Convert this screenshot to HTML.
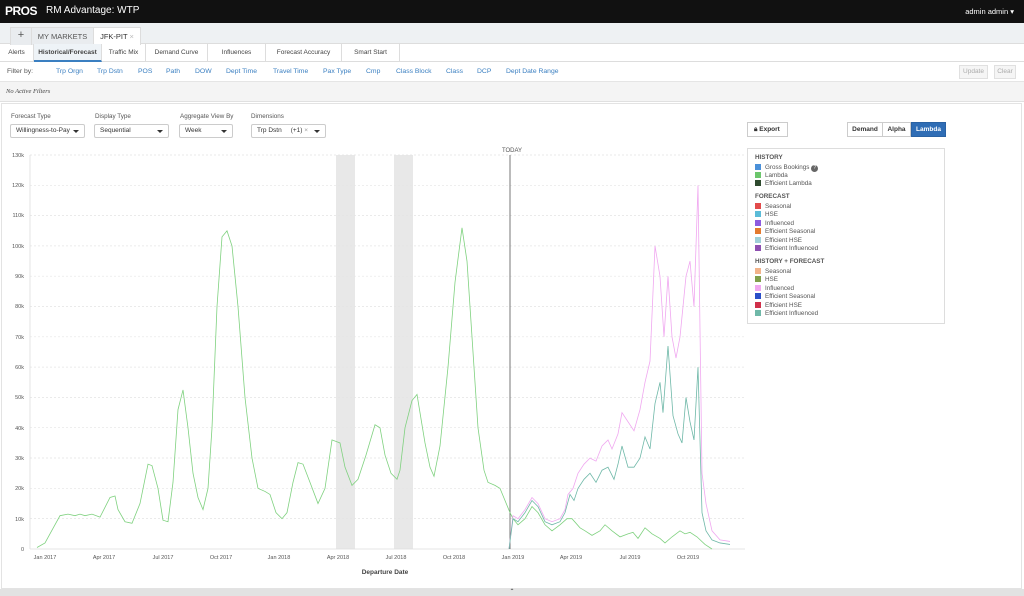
<!DOCTYPE html>
<html><head><meta charset="utf-8"><style>
*{box-sizing:border-box;margin:0;padding:0}
body{width:1024px;height:596px;overflow:hidden;font-family:"Liberation Sans",sans-serif;background:#fff;position:relative;color:#333}
.abs{position:absolute}
.top{left:0;top:0;width:1024px;height:23px;background:#111;color:#fff}
.tabs{left:0;top:23px;width:1024px;height:21px;background:#eef1f3;border-bottom:1px solid #ddd}
.tab{position:absolute;top:4px;height:18px;font-size:7.5px;line-height:17px;text-align:center;border:1px solid #ddd;border-bottom:none;background:#e9ecef;color:#555}
.sub{left:0;top:44px;width:1024px;height:18px;border-bottom:1px solid #ddd;font-size:6.5px}
.sub span{position:absolute;top:0;height:18px;line-height:17px;text-align:center;border-right:1px solid #ddd;color:#444}
.filt{left:0;top:62px;width:1024px;height:20px;font-size:6.8px;color:#3a7fc1;border-bottom:1px solid #e5e5e5}
.filt span{position:absolute;top:6px}
.gray{left:0;top:82px;width:1024px;height:20px;background:#f4f4f4;border-bottom:1px solid #e0e0e0}
.panel{left:1px;top:103px;width:1021px;height:486px;border:1px solid #e3e3e3;background:#fff}
.lbl{font-size:6.3px;color:#555}
.sel{height:14px;border:1px solid #ccc;border-radius:2px;font-size:6.5px;line-height:12px;padding-left:5px;color:#333}
.sel:after{content:"";position:absolute;right:5px;top:5px;border:3px solid transparent;border-top:3.5px solid #333}
.leg{left:747px;top:148px;width:198px;height:176px;border:1px solid #ddd;font-size:6.3px;color:#555}
.leg div{position:absolute;left:7px}
.leg b{font-size:6.3px;color:#555}
.sq{display:inline-block;width:6px;height:6px;margin-right:4px;vertical-align:-1px}
</style></head><body>
<div class="abs top">
 <div class="abs" style="left:5px;top:4px;font-weight:bold;font-size:12px;letter-spacing:-0.5px">PROS</div>
 <div class="abs" style="left:46px;top:5px;font-size:10px">RM Advantage: WTP</div>
 <div class="abs" style="right:10px;top:7px;font-size:7.5px">admin admin ▾</div>
</div>
<div class="abs tabs">
 <div class="tab" style="left:10px;width:22px;font-size:11px;line-height:15px">+</div>
 <div class="tab" style="left:31px;width:63px">MY MARKETS</div>
 <div class="tab" style="left:93px;width:48px;background:#fff;color:#333">JFK-PIT <span style="color:#bbb">×</span></div>
</div>
<div class="abs sub">
 <span style="left:0;width:34px">Alerts</span>
 <span style="left:34px;width:68px;background:#eef3f7;font-weight:bold;border-bottom:2px solid #3a7fc1">Historical/Forecast</span>
 <span style="left:102px;width:44px">Traffic Mix</span>
 <span style="left:146px;width:62px">Demand Curve</span>
 <span style="left:208px;width:58px">Influences</span>
 <span style="left:266px;width:76px">Forecast Accuracy</span>
 <span style="left:342px;width:58px">Smart Start</span>
</div>
<div class="abs filt">
 <span style="left:7px;color:#555">Filter by:</span>
 <span style="left:56px">Trp Orgn</span><span style="left:97px">Trp Dstn</span><span style="left:138px">POS</span><span style="left:166px">Path</span><span style="left:195px">DOW</span><span style="left:226px">Dept Time</span><span style="left:273px">Travel Time</span><span style="left:323px">Pax Type</span><span style="left:366px">Cmp</span><span style="left:396px">Class Block</span><span style="left:446px">Class</span><span style="left:477px">DCP</span><span style="left:506px">Dept Date Range</span>
 <div class="abs" style="left:959px;top:3px;width:29px;height:14px;border:1px solid #e0e0e0;background:#f5f5f5;color:#aaa;font-size:6.5px;line-height:12px;text-align:center">Update</div>
 <div class="abs" style="left:994px;top:3px;width:22px;height:14px;border:1px solid #e0e0e0;background:#f5f5f5;color:#aaa;font-size:6.5px;line-height:12px;text-align:center">Clear</div>
</div>
<div class="abs gray"><div class="abs" style="left:6px;top:6px;font-family:'Liberation Serif',serif;font-style:italic;font-size:6.5px;color:#444">No Active Filters</div></div>
<div class="abs panel"></div>
<div class="abs lbl" style="left:11px;top:113px">Forecast Type</div>
<div class="abs lbl" style="left:95px;top:113px">Display Type</div>
<div class="abs lbl" style="left:180px;top:113px">Aggregate View By</div>
<div class="abs lbl" style="left:251px;top:113px">Dimensions</div>
<div class="abs sel" style="left:10px;top:124px;width:75px">Willingness-to-Pay</div>
<div class="abs sel" style="left:94px;top:124px;width:75px">Sequential</div>
<div class="abs sel" style="left:179px;top:124px;width:54px">Week</div>
<div class="abs sel" style="left:251px;top:124px;width:75px">Trp Dstn &nbsp;&nbsp;&nbsp;&nbsp;(+1) <span style="color:#999">×</span></div>
<div class="abs" style="left:747px;top:122px;width:41px;height:15px;border:1px solid #ccc;font-size:6.5px;font-weight:bold;line-height:13px;padding-left:6px">🔒︎ Export</div>
<div class="abs" style="left:847px;top:122px;width:36px;height:15px;border:1px solid #ccc;font-size:6.5px;font-weight:bold;line-height:13px;text-align:center">Demand</div>
<div class="abs" style="left:882px;top:122px;width:29px;height:15px;border:1px solid #ccc;font-size:6.5px;font-weight:bold;line-height:13px;text-align:center">Alpha</div>
<div class="abs" style="left:911px;top:122px;width:35px;height:15px;background:#2f6db5;border:1px solid #2a62a3;color:#fff;font-size:6.5px;font-weight:bold;line-height:13px;text-align:center">Lambda</div>
<div class="abs leg">
 <div style="top:5px"><b>HISTORY</b></div>
 <div style="top:15px"><i class="sq" style="background:#4a90d9"></i>Gross Bookings <span style="display:inline-block;width:7px;height:7px;border-radius:50%;background:#666;color:#fff;font-size:5px;text-align:center;line-height:7px">?</span></div>
 <div style="top:23px"><i class="sq" style="background:#6cc66c"></i>Lambda</div>
 <div style="top:31px"><i class="sq" style="background:#2e4a2e"></i>Efficient Lambda</div>
 <div style="top:44px"><b>FORECAST</b></div>
 <div style="top:54px"><i class="sq" style="background:#e24b4b"></i>Seasonal</div>
 <div style="top:62px"><i class="sq" style="background:#5bbcd8"></i>HSE</div>
 <div style="top:71px"><i class="sq" style="background:#8d5be0"></i>Influenced</div>
 <div style="top:79px"><i class="sq" style="background:#e47a2e"></i>Efficient Seasonal</div>
 <div style="top:88px"><i class="sq" style="background:#9fd0d8"></i>Efficient HSE</div>
 <div style="top:96px"><i class="sq" style="background:#8e4fb0"></i>Efficient Influenced</div>
 <div style="top:109px"><b>HISTORY + FORECAST</b></div>
 <div style="top:119px"><i class="sq" style="background:#f2b38a"></i>Seasonal</div>
 <div style="top:127px"><i class="sq" style="background:#7f9f4a"></i>HSE</div>
 <div style="top:136px"><i class="sq" style="background:#f0a8f0"></i>Influenced</div>
 <div style="top:144px"><i class="sq" style="background:#2a4fc8"></i>Efficient Seasonal</div>
 <div style="top:153px"><i class="sq" style="background:#d0304a"></i>Efficient HSE</div>
 <div style="top:161px"><i class="sq" style="background:#6fb8a8"></i>Efficient Influenced</div>
</div>
<svg class="abs" style="left:0;top:0" width="1024" height="596">
 <rect x="336" y="155" width="19" height="394" fill="#e8e8e8"/>
 <rect x="394" y="155" width="19" height="394" fill="#e8e8e8"/>
 <g stroke="#e4e4e4" stroke-width="0.7" stroke-dasharray="2,2">
  <line x1="30" x2="745" y1="155" y2="155"/><line x1="30" x2="745" y1="185.3" y2="185.3"/><line x1="30" x2="745" y1="215.6" y2="215.6"/><line x1="30" x2="745" y1="245.9" y2="245.9"/><line x1="30" x2="745" y1="276.2" y2="276.2"/><line x1="30" x2="745" y1="306.5" y2="306.5"/><line x1="30" x2="745" y1="336.8" y2="336.8"/><line x1="30" x2="745" y1="367.1" y2="367.1"/><line x1="30" x2="745" y1="397.4" y2="397.4"/><line x1="30" x2="745" y1="427.7" y2="427.7"/><line x1="30" x2="745" y1="458" y2="458"/><line x1="30" x2="745" y1="488.3" y2="488.3"/><line x1="30" x2="745" y1="518.6" y2="518.6"/>
 </g>
 <line x1="30" y1="155" x2="30" y2="549" stroke="#ddd" stroke-width="0.8"/>
 <line x1="30" y1="549" x2="745" y2="549" stroke="#ddd" stroke-width="0.8"/>
 <g font-size="5.5" fill="#555" text-anchor="end" font-family="Liberation Sans">
  <text x="24" y="157">130k</text><text x="24" y="187">120k</text><text x="24" y="217">110k</text><text x="24" y="248">100k</text><text x="24" y="278">90k</text><text x="24" y="308">80k</text><text x="24" y="339">70k</text><text x="24" y="369">60k</text><text x="24" y="399">50k</text><text x="24" y="430">40k</text><text x="24" y="460">30k</text><text x="24" y="490">20k</text><text x="24" y="521">10k</text><text x="24" y="551">0</text>
 </g>
 <g font-size="5.5" fill="#555" text-anchor="middle" font-family="Liberation Sans">
  <text x="45" y="559">Jan 2017</text><text x="104" y="559">Apr 2017</text><text x="163" y="559">Jul 2017</text><text x="221" y="559">Oct 2017</text><text x="279" y="559">Jan 2018</text><text x="338" y="559">Apr 2018</text><text x="396" y="559">Jul 2018</text><text x="454" y="559">Oct 2018</text><text x="513" y="559">Jan 2019</text><text x="571" y="559">Apr 2019</text><text x="630" y="559">Jul 2019</text><text x="688" y="559">Oct 2019</text>
  <text x="385" y="574" font-size="6.5" font-weight="bold" fill="#444">Departure Date</text>
  <text x="512" y="152" font-size="6">TODAY</text>
 </g>
 <line x1="510" y1="155" x2="510" y2="549" stroke="#555" stroke-width="0.8"/>
 <g transform="translate(0,549) scale(1,-3.03)" fill="none" stroke-width="0.8">
  <polyline vector-effect="non-scaling-stroke" stroke="#7fd17f" points="37,0.5 45,2 50,5 60,11 68,11.5 75,11 80,11.5 85,11 92,11.5 100,10.5 110,17 115,17.5 118,13 125,9 132,8.5 140,15 148,28 152,27.5 158,20 163,9.5 168,9 173,22 178,46 183,52.5 188,40 193,25 198,17 203,13 208,20 212,40 217,80 222,103 227,105 232,100 238,80 245,50 252,30 258,20 265,19 270,18 276,12 282,10 287,12 293,22 298,28.5 303,28 310,22 318,15 325,20 332,36 340,35 345,27 352,21 358,23 366,31 375,41 380,40 385,31 391,25 397,23 400,26 405,40 412,49 417,51 420,45 425,35 430,27 434,24 440,34 448,60 455,88 462,106 467,95 472,70 478,40 484,26 488,22 495,21 500,20 505,16 510,12 513,10 518,8 525,10 532,14 538,12 545,8 552,6 560,8 567,10 572,10 580,7 585,6 592,4.5 600,6 605,8 612,6 620,4 628,5 633,5.5 638,3.5 645,7 652,5 660,3.5 665,2 672,4 680,6 685,5 690,5.5 697,4 705,1.5 712,0"/>
  <polyline vector-effect="non-scaling-stroke" stroke="#f0a8f0" points="509,0 513,11 518,10 525,13 532,17 538,15 545,10 552,9 560,10 565,13 568,18 573,20 578,25 584,28 590,30 596,29 602,34 608,36 612,33 618,38 622,45 628,42 634,39 640,46 645,55 650,62 655,100 660,90 664,70 668,90 672,70 676,63 680,70 686,90 690,95 694,80 698,120 702,25 706,15 712,6 720,3 730,2.5"/>
  <polyline vector-effect="non-scaling-stroke" stroke="#6fb8a8" points="509,0 513,10 518,9 525,12 532,16 538,14 545,9 552,8 560,9 565,12 570,18 574,16 578,20 584,23 590,25 596,22 602,26 608,27 614,23 618,28 622,34 628,27 634,27 640,30 645,37 650,33 655,48 660,55 663,45 668,67 673,44 678,38 682,35 686,50 690,42 694,36 698,60 702,12 706,6 712,3 720,2 730,1.5"/>
 </g>
</svg>
<div class="abs" style="left:0;top:589px;width:1024px;height:7px;background:#e2e2e2;font-size:6px;text-align:center;line-height:7px;color:#333">⌃</div>
</body></html>
